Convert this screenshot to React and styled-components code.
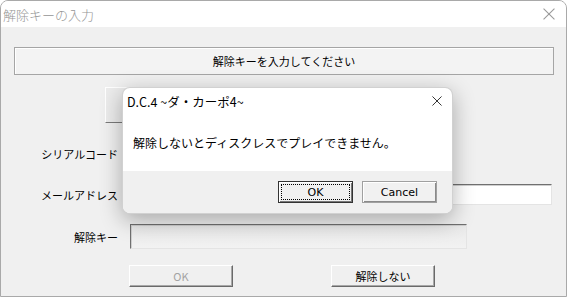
import styled, { createGlobalStyle } from "styled-components";

const GlobalStyle = createGlobalStyle`
  html, body {
    margin: 0;
    padding: 0;
    background: #ffffff;
    overflow: hidden;
  }
  body {
    font-family: "Noto Sans CJK JP", "Noto Sans", sans-serif;
  }
`;

const Window = styled.div`
  position: relative;
  width: 567px;
  height: 297px;
  box-sizing: border-box;
  border: 1px solid #a9a9a9;
  border-radius: 8px 8px 0 0;
  overflow: hidden;
  display: flex;
  flex-direction: column;
  background: #f0f0f0;
`;

const TitleBar = styled.div`
  height: 26px;
  flex: none;
  display: flex;
  align-items: center;
  justify-content: space-between;
  padding: 0 11px 0 2px;
  background: #ffffff;
  font-size: 13px;
  font-weight: 300;
  color: #959595;
`;

const Body = styled.div`
  flex: 1;
  padding: 20px 12px 0 13px;
`;

const Heading = styled.div`
  height: 28px;
  box-sizing: border-box;
  border: 1px solid #a5a5a5;
  box-shadow: inset 1px 1px 0 #ffffff;
  background: #f3f3f3;
  display: flex;
  align-items: center;
  justify-content: center;
  font-size: 11px;
  color: #000;
`;

const HiddenButton = styled.div`
  margin: 12px 0 0 91px;
  width: 320px;
  height: 36px;
  box-sizing: border-box;
  border: 1px solid;
  border-color: #ffffff #7a7a7a #7a7a7a #ffffff;
  background: #ececec;
`;

const Form = styled.div`
  display: flex;
  flex-direction: column;
  margin-top: 20px;
`;

const Row = styled.div`
  display: flex;
  align-items: center;
  gap: 12px;
  margin-top: ${(p) => p.$gap || 0}px;
`;

const Label = styled.div`
  width: 104px;
  text-align: right;
  font-size: 11px;
  color: #000;
`;

const Field = styled.div`
  width: ${(p) => p.$w}px;
  height: ${(p) => p.$h}px;
  box-sizing: border-box;
  border: 1px solid;
  border-color: #707070 #e4e4e4 #e4e4e4 #707070;
  box-shadow: inset 1px 1px 0 #cfcfcf;
  background: ${(p) => (p.$disabled ? "linear-gradient(#e9e9e9, #f2f2f2)" : "#ffffff")};
`;

const ButtonRow = styled.div`
  display: flex;
  gap: 98px;
  margin: 16px 0 0 115px;
`;

const ClassicButton = styled.div`
  width: 104px;
  height: 22px;
  box-sizing: border-box;
  border: 1px solid;
  border-color: #ffffff #6a6a6a #6a6a6a #ffffff;
  box-shadow: inset -1px -1px 0 #a8a8a8;
  background: #f0f0f0;
  display: flex;
  align-items: center;
  justify-content: center;
  font-size: 11px;
  color: ${(p) => (p.$disabled ? "#a3a3a3" : "#000")};
`;

const Dialog = styled.div`
  position: absolute;
  left: 121px;
  top: 86px;
  width: 331px;
  height: 127px;
  box-sizing: border-box;
  border: 1px solid rgba(0, 0, 0, 0.18);
  border-radius: 8px;
  overflow: hidden;
  background: #ffffff;
  box-shadow: 0 6px 22px rgba(0, 0, 0, 0.3);
  display: flex;
  flex-direction: column;
`;

const DialogTitle = styled.div`
  height: 26px;
  flex: none;
  display: flex;
  align-items: center;
  justify-content: space-between;
  padding: 0 10px 0 4px;
  font-size: 12.5px;
  color: #000;
`;

const Message = styled.div`
  flex: 1;
  display: flex;
  align-items: center;
  padding-left: 10px;
  font-size: 12px;
  color: #000;
`;

const Footer = styled.div`
  height: 42px;
  flex: none;
  display: flex;
  align-items: center;
  justify-content: flex-end;
  gap: 9px;
  padding-right: 15px;
  background: #f0f0f0;
`;

const DialogButton = styled.div`
  width: 75px;
  height: 22px;
  box-sizing: border-box;
  border: 1px solid ${(p) => (p.$default ? "#333333" : "#a0a0a0")};
  box-shadow: ${(p) =>
    p.$default
      ? "inset 1px 1px 0 #ffffff, inset -1px -1px 0 #777777"
      : "inset 1px 1px 0 #ffffff, inset -1px -1px 0 #8a8a8a"};
  background: #f1f1f1;
  display: flex;
  align-items: center;
  justify-content: center;
  font-family: "DejaVu Sans", sans-serif;
  font-size: 11px;
  color: #000;
  outline: ${(p) => (p.$default ? "1px dotted #000" : "none")};
  outline-offset: -4px;
`;

const CloseIcon = ({ size = 11, color = "#888" }) => (
  <svg width={size} height={size} viewBox="0 0 11 11">
    <path d="M0.5 0.5L10.5 10.5M10.5 0.5L0.5 10.5" stroke={color} strokeWidth="1" />
  </svg>
);

export default function App() {
  return (
    <>
      <GlobalStyle />
      <Window>
        <TitleBar>
          <span>解除キーの入力</span>
          <CloseIcon size={12} color="#9a9a9a" />
        </TitleBar>
        <Body>
          <Heading>解除キーを入力してください</Heading>
          <HiddenButton />
          <Form>
            <Row>
              <Label>シリアルコード</Label>
              <Field $w={300} $h={22} />
            </Row>
            <Row $gap={19}>
              <Label>メールアドレス</Label>
              <Field $w={422} $h={21} />
            </Row>
            <Row $gap={19}>
              <Label>解除キー</Label>
              <Field $w={337} $h={25} $disabled />
            </Row>
          </Form>
          <ButtonRow>
            <ClassicButton $disabled>OK</ClassicButton>
            <ClassicButton>解除しない</ClassicButton>
          </ButtonRow>
        </Body>
        <Dialog>
          <DialogTitle>
            <span>D.C.4 ~ダ・カーポ4~</span>
            <CloseIcon size={10} color="#222" />
          </DialogTitle>
          <Message>解除しないとディスクレスでプレイできません。</Message>
          <Footer>
            <DialogButton $default>OK</DialogButton>
            <DialogButton>Cancel</DialogButton>
          </Footer>
        </Dialog>
      </Window>
    </>
  );
}
